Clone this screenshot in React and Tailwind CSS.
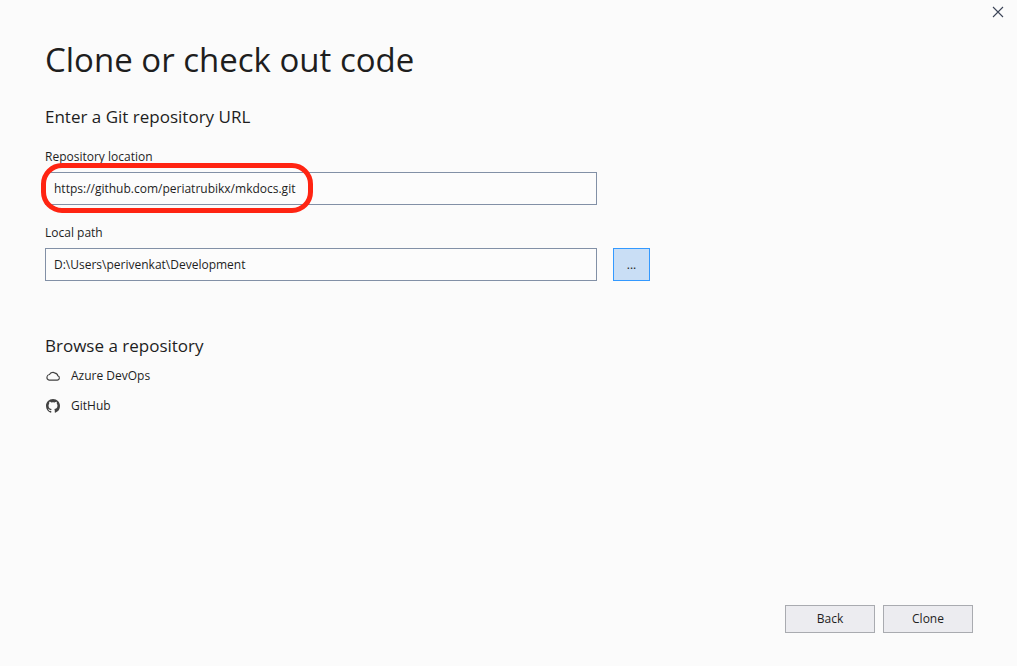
const inputClass =
  "block h-[33px] w-full border border-[#8290a6] bg-[#fcfcfc] px-2 text-xs text-[#1e1e1e] outline-none";
const footerButtonClass =
  "h-7 w-[90px] border border-[#a9abb0] bg-[#ececf0] text-xs text-[#1e1e1e]";

function CloseIcon() {
  return (
    <svg width="12" height="12" viewBox="0 0 12 12" aria-hidden="true">
      <path d="M1 1l10 10M11 1L1 11" fill="none" stroke="#3c4457" strokeWidth="1.1" />
    </svg>
  );
}

function CloudIcon() {
  return (
    <svg width="16" height="16" viewBox="0 0 16 16" aria-hidden="true">
      <path
        d="M3.8 12.1H12.4A2.2 2.2 0 0 0 12.8 7.8A3.2 3.2 0 0 0 9.9 5.1A2.9 2.9 0 0 0 7.6 4.4A3.5 3.5 0 0 0 4.5 6.5A2.9 2.9 0 0 0 3.8 12.1Z"
        fill="none"
        stroke="#424242"
        strokeWidth="1.1"
      />
    </svg>
  );
}

function GitHubIcon() {
  return (
    <svg width="16" height="16" viewBox="0 0 16 16" aria-hidden="true">
      <path
        d="M8 1C4.13 1 1 4.13 1 8c0 3.1 2 5.72 4.79 6.64.35.07.48-.15.48-.34v-1.3c-1.95.42-2.36-.83-2.36-.83-.32-.81-.78-1.03-.78-1.03-.63-.43.05-.42.05-.42.7.05 1.07.72 1.07.72.63 1.07 1.64.76 2.04.58.06-.45.24-.76.44-.94-1.55-.17-3.19-.77-3.19-3.46 0-.76.28-1.39.72-1.88-.07-.17-.31-.89.07-1.85 0 0 .59-.19 1.93.72a6.7 6.7 0 0 1 3.5 0c1.34-.91 1.93-.72 1.93-.72.38.96.14 1.68.07 1.85.45.49.72 1.12.72 1.88 0 2.7-1.64 3.29-3.2 3.46.25.22.48.65.48 1.3v1.92c0 .19.12.41.48.34A7 7 0 0 0 15 8c0-3.87-3.13-7-7-7z"
        fill="#424242"
      />
    </svg>
  );
}

export default function App() {
  return (
    <div className="flex min-h-screen flex-col bg-[#fbfbfb] font-['Open_Sans','Noto_Sans',sans-serif] text-[#1e1e1e]">
      <header className="flex h-6 justify-end pr-2">
        <button type="button" aria-label="Close" className="flex w-[22px] items-center justify-center">
          <CloseIcon />
        </button>
      </header>

      <main className="flex-1 px-[45px] pt-3">
        <h1 className="text-[33px] leading-[48px]">Clone or check out code</h1>

        <section className="mt-[19px] max-w-[605px]">
          <h2 className="text-[17px] leading-7">Enter a Git repository URL</h2>

          <div className="mt-[18px] grid grid-cols-[1fr_37px] gap-x-4">
            <div>
              <label htmlFor="location" className="block h-[23px] text-xs leading-4">
                Repository location
              </label>
              <div className="relative">
                <input
                  id="location"
                  className={inputClass}
                  defaultValue="https://github.com/periatrubikx/mkdocs.git"
                />
                <div className="pointer-events-none absolute -top-[9px] -left-1 h-[50px] w-[272px] rounded-[21px] border-5 border-[#ff2412]" />
              </div>
            </div>
          </div>

          <div className="mt-5 grid grid-cols-[1fr_37px] items-end gap-x-4">
            <div>
              <label htmlFor="path" className="block h-[23px] text-xs leading-4">
                Local path
              </label>
              <input id="path" className={inputClass} defaultValue="D:\Users\perivenkat\Development" />
            </div>
            <button
              type="button"
              aria-label="Browse for a local path"
              className="h-[33px] border border-[#3399ff] bg-[#c9def5] text-xs"
            >
              ...
            </button>
          </div>
        </section>

        <section className="mt-[51px]">
          <h2 className="text-[17px] leading-7">Browse a repository</h2>
          <ul className="mt-px text-xs">
            <li>
              <a href="#azure" className="flex h-[30px] items-center gap-[10px]">
                <CloudIcon />
                Azure DevOps
              </a>
            </li>
            <li>
              <a href="#github" className="flex h-[30px] items-center gap-[10px]">
                <GitHubIcon />
                GitHub
              </a>
            </li>
          </ul>
        </section>
      </main>

      <footer className="flex justify-end gap-2 pr-11 pb-[33px]">
        <button type="button" className={footerButtonClass}>Back</button>
        <button type="button" className={footerButtonClass}>Clone</button>
      </footer>
    </div>
  );
}
